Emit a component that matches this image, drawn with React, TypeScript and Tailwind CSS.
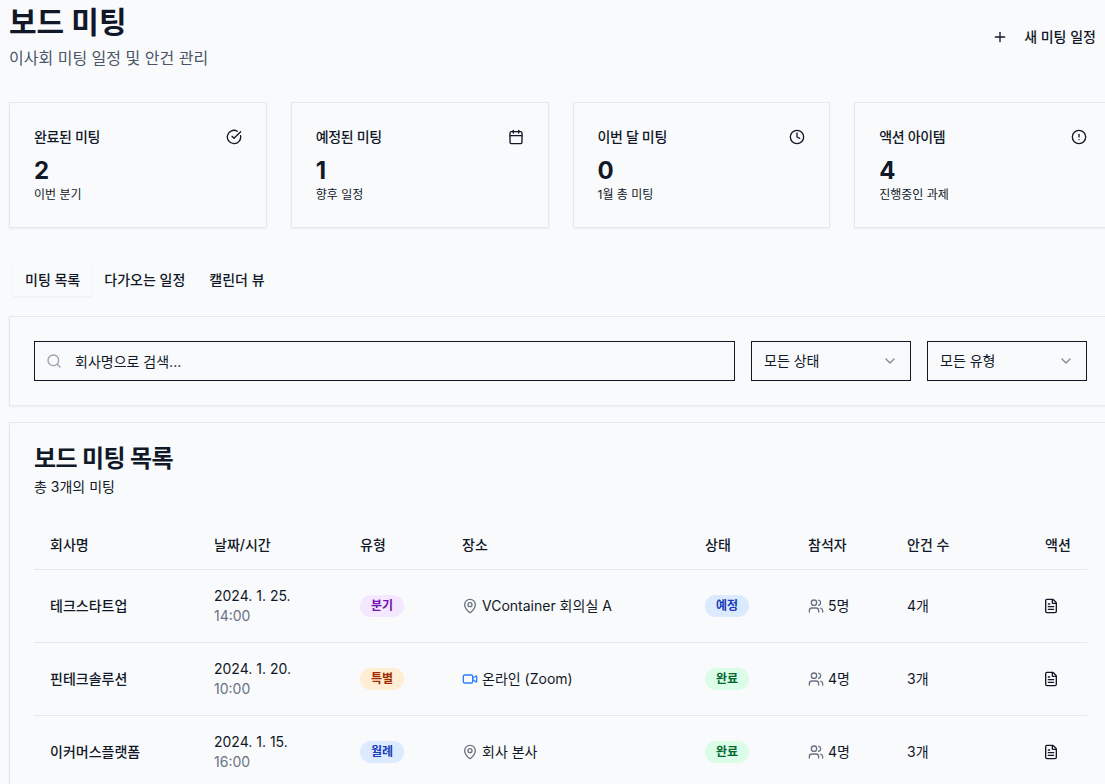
import { Calendar, ChevronDown, CircleAlert, CircleCheckBig, Clock, FileText, MapPin, Plus, Search, Users, Video } from 'lucide-react';

const stats = [
  { title: '완료된 미팅', value: '2', sub: '이번 분기', Icon: CircleCheckBig },
  { title: '예정된 미팅', value: '1', sub: '향후 일정', Icon: Calendar },
  { title: '이번 달 미팅', value: '0', sub: '1월 총 미팅', Icon: Clock },
  { title: '액션 아이템', value: '4', sub: '진행중인 과제', Icon: CircleAlert },
];

const meetings = [
  { company: '테크스타트업', date: '2024. 1. 25.', time: '14:00', type: '분기', typeClass: 'bg-purple-100 text-purple-800', place: 'VContainer 회의실 A', online: false, status: '예정', statusClass: 'bg-blue-100 text-blue-800', people: '5명', items: '4개' },
  { company: '핀테크솔루션', date: '2024. 1. 20.', time: '10:00', type: '특별', typeClass: 'bg-orange-100 text-orange-800', place: '온라인 (Zoom)', online: true, status: '완료', statusClass: 'bg-green-100 text-green-800', people: '4명', items: '3개' },
  { company: '이커머스플랫폼', date: '2024. 1. 15.', time: '16:00', type: '월례', typeClass: 'bg-blue-100 text-blue-800', place: '회사 본사', online: false, status: '완료', statusClass: 'bg-green-100 text-green-800', people: '4명', items: '3개' },
];

function Badge({ label, className }: { label: string; className: string }) {
  return (
    <span className={`inline-flex items-center rounded-full border border-transparent px-2.5 py-0.5 text-xs font-semibold ${className}`}>
      {label}
    </span>
  );
}

function FilterSelect({ label }: { label: string }) {
  return (
    <button className="flex h-10 w-40 items-center justify-between border border-[#111827] px-3 text-sm">
      <span>{label}</span>
      <ChevronDown className="h-4 w-4 opacity-50" />
    </button>
  );
}

export default function App() {
  return (
    <div className="h-[784px] w-[1105px] overflow-hidden bg-[#f9fafc] text-[#111827] [font-family:Inter,'Noto_Sans_CJK_KR',sans-serif]">
      <div className="ml-[9px] w-[1103px] pt-1">
        <div className="mb-8 flex items-center justify-between">
          <div>
            <h1 className="text-3xl font-bold">보드 미팅</h1>
            <p className="mt-1.5 text-base text-gray-600">이사회 미팅 일정 및 안건 관리</p>
          </div>
          <button className="flex h-10 items-center px-4 text-sm font-medium">
            <Plus className="mr-4 h-4 w-4" />
            새 미팅 일정
          </button>
        </div>

        <div className="mb-8 grid grid-cols-4 gap-6">
          {stats.map(({ title, value, sub, Icon }) => (
            <div key={title} className="border border-gray-200 p-6 shadow-xs">
              <div className="flex items-center justify-between pb-2">
                <h3 className="text-sm font-medium tracking-tight">{title}</h3>
                <Icon className="h-4 w-4" />
              </div>
              <div className="text-2xl font-bold">{value}</div>
              <p className="text-xs">{sub}</p>
            </div>
          ))}
        </div>

        <div className="flex h-10 items-center p-1 text-sm font-medium">
          <div className="px-3 py-1.5 shadow-xs">미팅 목록</div>
          <div className="px-3 py-1.5">다가오는 일정</div>
          <div className="px-3 py-1.5">캘린더 뷰</div>
        </div>

        <div className="mt-4 flex gap-4 border border-gray-200 p-6 shadow-xs">
          <div className="relative flex-1">
            <Search className="absolute left-3 top-3 h-4 w-4 text-gray-400" />
            <input
              placeholder="회사명으로 검색..."
              className="h-10 w-full border border-[#111827] pl-10 pr-3 text-sm placeholder:text-[#111827]"
            />
          </div>
          <FilterSelect label="모든 상태" />
          <FilterSelect label="모든 유형" />
        </div>

        <div className="mt-4 border border-gray-200 shadow-xs">
          <div className="p-6">
            <h2 className="text-2xl font-bold leading-none tracking-tight">보드 미팅 목록</h2>
            <p className="mt-1.5 text-sm">총 3개의 미팅</p>
          </div>
          <div className="px-6 pb-6">
            <table className="w-full table-fixed text-sm">
              <thead>
                <tr className="border-b border-gray-200 text-left">
                  <th className="h-12 w-[164px] px-4 font-medium">회사명</th>
                  <th className="h-12 w-[146px] px-4 font-medium">날짜/시간</th>
                  <th className="h-12 w-[102px] px-4 font-medium">유형</th>
                  <th className="h-12 w-[243px] px-4 font-medium">장소</th>
                  <th className="h-12 w-[103px] px-4 font-medium">상태</th>
                  <th className="h-12 w-[99px] px-4 font-medium">참석자</th>
                  <th className="h-12 w-[138px] px-4 font-medium">안건 수</th>
                  <th className="h-12 w-[58px] px-4 font-medium">액션</th>
                </tr>
              </thead>
              <tbody>
                {meetings.map((m) => (
                  <tr key={m.company} className="border-b border-gray-200">
                    <td className="p-4 font-medium">{m.company}</td>
                    <td className="p-4">
                      <div>{m.date}</div>
                      <div className="text-gray-500">{m.time}</div>
                    </td>
                    <td className="p-4"><Badge label={m.type} className={m.typeClass} /></td>
                    <td className="p-4">
                      <div className="flex items-center gap-1">
                        {m.online ? <Video className="h-4 w-4 text-blue-500" /> : <MapPin className="h-4 w-4 text-gray-500" />}
                        {m.place}
                      </div>
                    </td>
                    <td className="p-4"><Badge label={m.status} className={m.statusClass} /></td>
                    <td className="p-4">
                      <div className="flex items-center gap-1">
                        <Users className="h-4 w-4 text-gray-500" />
                        {m.people}
                      </div>
                    </td>
                    <td className="p-4">{m.items}</td>
                    <td className="p-4"><FileText className="ml-[-2px] h-4 w-4" /></td>
                  </tr>
                ))}
              </tbody>
            </table>
          </div>
        </div>
      </div>
    </div>
  );
}
